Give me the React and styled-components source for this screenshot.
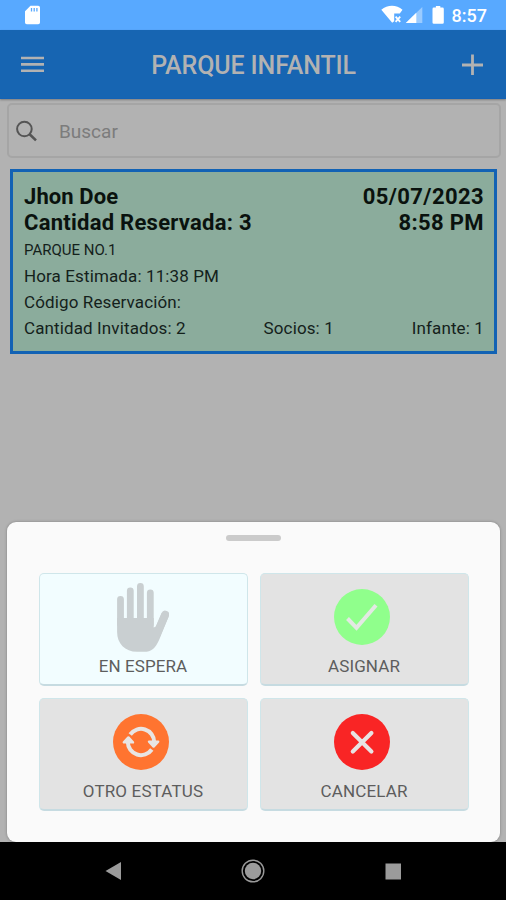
import styled, { createGlobalStyle } from 'styled-components';

const options = [
    { id: 'wait', label: 'EN ESPERA', active: true, spacing: 0.08 },
    { id: 'assign', label: 'ASIGNAR', spacing: 0.1 },
    { id: 'status', label: 'OTRO ESTATUS', spacing: 0.15 },
    { id: 'cancel', label: 'CANCELAR', spacing: 0.15 },
];

const StatusIcons = () => (
    <svg width="68" height="22" viewBox="0 0 68 22" fill="#fff">
        <path d="M0.3 5.7C6.5 0.5 15.5 0.5 21.5 5.7L18.8 9.6H13.2V17.2L11.2 18.8Z" />
        <path d="M14.6 12.6l4.6 5.2M19.2 12.6l-4.6 5.2" stroke="#fff" strokeWidth="1.8" />
        <path d="M41.3 3V19H24.8Z" opacity="0.4" />
        <path d="M35.3 8.8V19H24.8Z" />
        <path d="M54.9 3.6V2h4.4v1.6h2.2a1.3 1.3 0 0 1 1.3 1.3v13.6a1.3 1.3 0 0 1-1.3 1.3h-8.7a1.3 1.3 0 0 1-1.3-1.3V4.9a1.3 1.3 0 0 1 1.3-1.3z" />
    </svg>
);

const HandIcon = () => (
    <svg width="56" height="72" viewBox="0 0 56 72">
        <g stroke="#c9cfd1" strokeLinecap="round" fill="none">
            <path d="M7.5 17.3V42M17.3 8.8V40M27.4 4.4V40M37.3 10.8V42" strokeWidth="6.8" />
            <path d="M52.2 32.6L43 54" strokeWidth="8" />
        </g>
        <path
            d="M4.1 36H40.7V45.4L43 44.6L48.8 31L55.6 34.4L46.5 57C42.5 66.5 38.5 69.8 31 69.8H24C12 69.8 4.1 61.5 4.1 50Z"
            fill="#c9cfd1"
        />
    </svg>
);

const CheckIcon = () => (
    <svg width="56" height="56" viewBox="0 0 56 56" fill="none">
        <circle cx="28" cy="28" r="28" fill="#90ff8c" />
        <path d="M13.5 29.5L22.5 38.8L42 16.3" stroke="#e3e8e3" strokeWidth="4" />
    </svg>
);

const RefreshIcon = () => (
    <svg width="56" height="56" viewBox="0 0 56 56" fill="none">
        <circle cx="28" cy="28" r="28" fill="#ff7430" />
        <g stroke="#e8e5e3" strokeWidth="4">
            <path d="M17.2 20.5A13.2 13.2 0 0 1 41.2 28" />
            <path d="M38.8 35.5A13.2 13.2 0 0 1 14.8 28" />
        </g>
        <path
            d="M36 27.6H45.2L40.6 32.6ZM10.8 28.4H20L15.4 23.4Z"
            fill="#e8e5e3"
            stroke="#e8e5e3"
            strokeWidth="2.4"
            strokeLinejoin="round"
        />
    </svg>
);

const CrossIcon = () => (
    <svg width="56" height="56" viewBox="0 0 56 56" fill="none">
        <circle cx="28" cy="28" r="28" fill="#f92525" />
        <path d="M18.8 19L37.4 37.4M37.4 19L18.8 37.4" stroke="#e8e3e3" strokeWidth="4.2" strokeLinecap="round" />
    </svg>
);

const icons = {
    wait: HandIcon,
    assign: CheckIcon,
    status: RefreshIcon,
    cancel: CrossIcon,
};

const App = () => {
    return (
        <Screen>
            <GlobalStyle />
            <StatusBar>
                <svg width="16" height="20" viewBox="0 0 16 20">
                    <path d="M5.5 0.8H13.2A1.8 1.8 0 0 1 15 2.6V17.5A1.8 1.8 0 0 1 13.2 19.3H1.8A1.8 1.8 0 0 1 0 17.5V6.3Z" fill="#fff" />
                    <path d="M6.5 3V6.4M9.2 3V6.4M11.9 3V6.4" stroke="#58a9ff" strokeWidth="1.3" />
                </svg>
                <StatusRight>
                    <StatusIcons />
                    <Clock>8:57</Clock>
                </StatusRight>
            </StatusBar>
            <Header>
                <svg width="24" height="18" viewBox="0 0 24 18">
                    <path d="M0 3H23M0 9.4H23M0 15.8H23" stroke="#b2b2b2" strokeWidth="2.6" />
                </svg>
                <Title>PARQUE INFANTIL</Title>
                <svg width="22" height="22" viewBox="0 0 22 22">
                    <path d="M1 12H22M11.5 1.5V22" stroke="#b2b2b2" strokeWidth="2.8" />
                </svg>
            </Header>
            <Content>
                <SearchBox>
                    <svg width="22" height="22" viewBox="0 0 22 22" fill="none" stroke="#555">
                        <circle cx="8.4" cy="9" r="7.3" strokeWidth="2" />
                        <path d="M13.6 14.2L20 20.4" strokeWidth="2.6" />
                    </svg>
                    <Placeholder>Buscar</Placeholder>
                </SearchBox>
                <Card>
                    <MainRow>
                        <MainText $spacing="0.1px">Jhon Doe</MainText>
                        <MainText $spacing="0.4px">05/07/2023</MainText>
                    </MainRow>
                    <MainRow>
                        <MainText $spacing="0.26px">Cantidad Reservada: 3</MainText>
                        <MainText $spacing="0.35px">8:58 PM</MainText>
                    </MainRow>
                    <DetailRow $small>PARQUE NO.1</DetailRow>
                    <DetailRow>Hora Estimada: 11:38 PM</DetailRow>
                    <DetailRow>Código Reservación:</DetailRow>
                    <DetailRow>
                        <span>Cantidad Invitados: 2</span>
                        <span>Socios: 1</span>
                        <span>Infante: 1</span>
                    </DetailRow>
                </Card>
            </Content>
            <Sheet>
                <Handle />
                <Options>
                    {options.map(({ id, label, active, spacing }) => {
                        const Icon = icons[id];
                        return (
                            <Option key={id} $active={active}>
                                <IconSlot $tall={active}>
                                    <Icon />
                                </IconSlot>
                                <OptionLabel $spacing={spacing}>{label}</OptionLabel>
                            </Option>
                        );
                    })}
                </Options>
            </Sheet>
            <NavBar>
                <svg width="17" height="20" viewBox="0 0 17 20">
                    <path d="M0.5 10L16 1V19Z" fill="#9b9b9b" />
                </svg>
                <svg width="24" height="24" viewBox="0 0 24 24">
                    <circle cx="12" cy="12" r="10.8" fill="none" stroke="#999" strokeWidth="1.4" />
                    <circle cx="12" cy="12" r="8.2" fill="#9b9b9b" />
                </svg>
                <svg width="17" height="17" viewBox="0 0 17 17">
                    <rect x="0.5" y="0.5" width="15.5" height="16" fill="#9b9b9b" />
                </svg>
            </NavBar>
        </Screen>
    );
};

const GlobalStyle = createGlobalStyle`
    * {
        box-sizing: border-box;
    }

    body {
        margin: 0;
        background: #b2b2b2;
        font-family: Roboto, 'Liberation Sans', sans-serif;
    }

    svg {
        display: block;
        flex-shrink: 0;
    }
`;

const Screen = styled.main`
    width: 506px;
    height: 900px;
    display: flex;
    flex-direction: column;
    overflow: hidden;
    background: #b2b2b2;
    white-space: nowrap;
`;

const StatusBar = styled.div`
    height: 30px;
    display: flex;
    align-items: center;
    justify-content: space-between;
    padding: 0 19px 0 25px;
    background: #58a9ff;
`;

const StatusRight = styled.div`
    display: flex;
    align-items: center;
    gap: 3px;
`;

const Clock = styled.span`
    color: #fff;
    font-size: 18px;
    font-weight: 500;
    line-height: 22px;
    padding-top: 2px;
`;

const Header = styled.header`
    height: 69px;
    display: flex;
    align-items: center;
    justify-content: space-between;
    padding: 0 23px 0 21px;
    background: #1765b2;
    border-bottom: 1px solid #1462b5;
    box-shadow: 0 1px 2px rgba(0, 0, 0, 0.3);
`;

const Title = styled.h1`
    margin: 0;
    padding: 3px 0 0 1px;
    color: #b2b2b2;
    font-size: 25px;
    font-weight: 500;
    letter-spacing: -0.12px;
`;

const Content = styled.section`
    flex: 1;
    padding: 4px 5px 0 7px;
`;

const SearchBox = styled.div`
    height: 55px;
    display: flex;
    align-items: center;
    gap: 21px;
    padding: 0 7px;
    border: 2px solid #a5a5a5;
    border-radius: 5px;
`;

const Placeholder = styled.span`
    color: #7c7c7c;
    font-size: 19px;
    padding-top: 2px;
`;

const Card = styled.article`
    height: 185px;
    margin: 11px 4px 0 3px;
    padding: 12px 10px 0 11px;
    border: 3px solid #1262b4;
    background: #8bac9c;
    color: #0a120e;
`;

const MainRow = styled.div`
    display: flex;
    justify-content: space-between;
    font-size: 22px;
    font-weight: 700;
    line-height: 26px;
`;

const MainText = styled.span`
    letter-spacing: ${({ $spacing }) => $spacing};
`;

const DetailRow = styled.div`
    display: flex;
    justify-content: space-between;
    font-size: ${({ $small }) => ($small ? '15px' : '17px')};
    line-height: 26.2px;
    letter-spacing: ${({ $small }) => ($small ? '0' : '0.12px')};
    color: #14211b;

    &:nth-child(3) {
        padding-top: 0.6px;
    }
`;

const Sheet = styled.section`
    height: 320px;
    display: flex;
    flex-direction: column;
    align-items: center;
    margin: 0 6px 0 7px;
    padding-top: 13px;
    border-radius: 9px;
    background: #fafafa;
    box-shadow: 0 0 3px rgba(0, 0, 0, 0.3);
`;

const Handle = styled.div`
    width: 55px;
    height: 6px;
    border-radius: 3px;
    background: #cbcbcb;
`;

const Options = styled.div`
    display: grid;
    grid-template-columns: 209px 209px;
    grid-auto-rows: 113px;
    gap: 12px;
    margin-top: 32px;
`;

const Option = styled.button`
    display: flex;
    flex-direction: column;
    align-items: center;
    padding: 0;
    border: 1px solid #cfe6ea;
    border-bottom: 2px solid #c6dbe1;
    border-radius: 5px;
    background: ${({ $active }) => ($active ? '#f2fdff' : '#e3e3e3')};
    font-family: inherit;
`;

const IconSlot = styled.div`
    height: 80px;
    padding-top: ${({ $tall }) => ($tall ? '8px' : '15px')};
    margin-right: 5px;
`;

const OptionLabel = styled.span`
    color: #5d5d5d;
    font-size: 17px;
    line-height: 24px;
    letter-spacing: ${({ $spacing }) => $spacing}px;
`;

const NavBar = styled.nav`
    height: 58px;
    display: flex;
    align-items: center;
    justify-content: space-between;
    padding: 0 104.5px 0 105px;
    background: #000;
`;

export default App;
